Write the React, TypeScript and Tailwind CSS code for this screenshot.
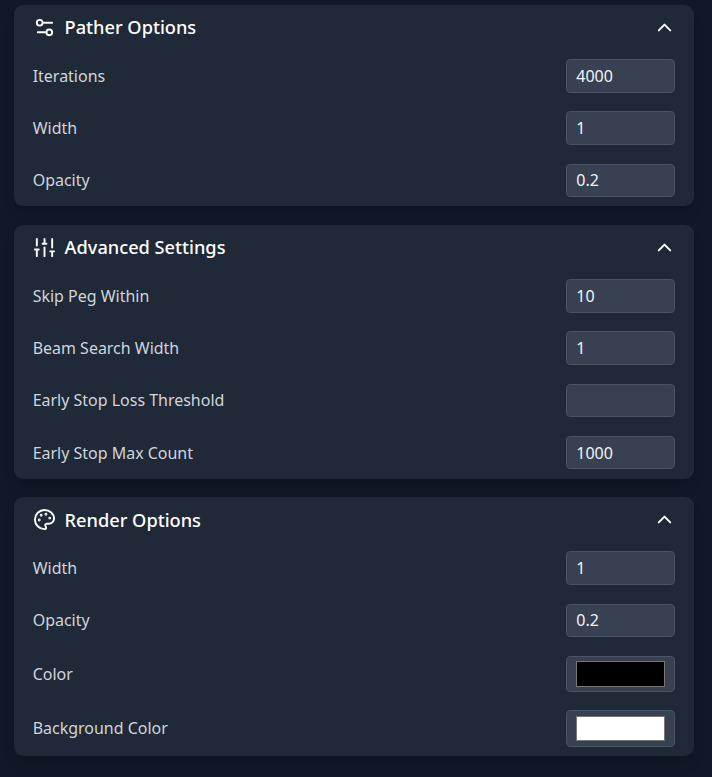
import { useState, type ReactNode } from "react";

function Icon({ children, className = "" }: { children: ReactNode; className?: string }) {
  return (
    <svg
      width="23"
      height="23"
      viewBox="0 0 24 24"
      fill="none"
      stroke="currentColor"
      strokeWidth="2"
      strokeLinecap="round"
      strokeLinejoin="round"
      className={className}
    >
      {children}
    </svg>
  );
}

function PatherIcon() {
  return (
    <Icon>
      <path d="M20 7h-9" />
      <path d="M14 17H5" />
      <circle cx="17" cy="17" r="3" />
      <circle cx="7" cy="7" r="3" />
    </Icon>
  );
}

function SlidersIcon() {
  return (
    <Icon>
      <path d="M4 21v-7M4 10V3M12 21v-9M12 8V3M20 21v-5M20 12V3M2 14h4M10 8h4M18 16h4" />
    </Icon>
  );
}

function PaletteIcon() {
  return (
    <Icon>
      <circle cx="13.5" cy="6.5" r=".5" fill="currentColor" />
      <circle cx="17.5" cy="10.5" r=".5" fill="currentColor" />
      <circle cx="8.5" cy="7.5" r=".5" fill="currentColor" />
      <circle cx="6.5" cy="12.5" r=".5" fill="currentColor" />
      <path d="M12 2C6.5 2 2 6.5 2 12s4.5 10 10 10c.926 0 1.648-.746 1.648-1.688 0-.437-.18-.835-.437-1.125-.29-.289-.438-.652-.438-1.125a1.64 1.64 0 0 1 1.668-1.668h1.996c3.051 0 5.555-2.503 5.555-5.554C21.965 6.012 17.461 2 12 2z" />
    </Icon>
  );
}

function Section({ icon, title, children }: { icon: ReactNode; title: string; children: ReactNode }) {
  const [open, setOpen] = useState(true);
  return (
    <section className="rounded-[9.2px] bg-[#1f2937] shadow-lg">
      <button
        type="button"
        onClick={() => setOpen(!open)}
        className="flex h-[54px] w-full items-start justify-between px-[18.6px] pt-[8.5px] text-white"
      >
        <span className="flex h-[28px] items-center gap-[8.8px]">
          {icon}
          <span className="-mt-[0.6px] text-[18.22px] leading-[28px] font-medium">{title}</span>
        </span>
        <span className="-mr-[0.5px] flex h-[28px] items-center">
          <Icon className={open ? "" : "rotate-180"}>
            <path d="m18 15-6-6-6 6" />
          </Icon>
        </span>
      </button>
      {open && <div className="flex flex-col gap-[18.4px] pr-[18.7px] pb-[8.85px] pl-[18.5px]">{children}</div>}
    </section>
  );
}

function NumberField({ label, value }: { label: string; value: string }) {
  return (
    <label className="flex h-[33.85px] items-start justify-between">
      <span className="mt-[0.7px] text-[15.98px] leading-[33.4px] text-[#d1d5db]">{label}</span>
      <input
        type="text"
        defaultValue={value}
        className="h-[33.4px] w-[109.25px] rounded-[4.6px] border border-[#4b5563] bg-[#374151] px-[9.2px] text-[16px] text-[#f3f4f6] outline-none"
      />
    </label>
  );
}

function ColorField({ label, swatch }: { label: string; swatch: string }) {
  return (
    <div className="flex h-[36.15px] items-start justify-between last:h-[36.4px]">
      <span className="text-[15.98px] leading-[36.15px] text-[#d1d5db]">{label}</span>
      <div className="h-[36.35px] w-[109.25px] rounded-[4.6px] border border-[#4b5563] bg-[#374151] px-[9.2px] pt-[4.25px]">
        <div className={`h-[25.5px] border border-[#767676] ${swatch}`} />
      </div>
    </div>
  );
}

export default function App() {
  return (
    <main className="flex h-[777px] flex-col gap-[18.8px] bg-[#111827] pt-[5.2px] pr-[18px] pl-[14.2px] font-['Noto_Sans',sans-serif]">
      <Section title="Pather Options" icon={<PatherIcon />}>
        <NumberField label="Iterations" value="4000" />
        <NumberField label="Width" value="1" />
        <NumberField label="Opacity" value="0.2" />
      </Section>
      <Section title="Advanced Settings" icon={<SlidersIcon />}>
        <NumberField label="Skip Peg Within" value="10" />
        <NumberField label="Beam Search Width" value="1" />
        <NumberField label="Early Stop Loss Threshold" value="" />
        <NumberField label="Early Stop Max Count" value="1000" />
      </Section>
      <Section title="Render Options" icon={<PaletteIcon />}>
        <NumberField label="Width" value="1" />
        <NumberField label="Opacity" value="0.2" />
        <ColorField label="Color" swatch="bg-black" />
        <ColorField label="Background Color" swatch="bg-white" />
      </Section>
    </main>
  );
}
